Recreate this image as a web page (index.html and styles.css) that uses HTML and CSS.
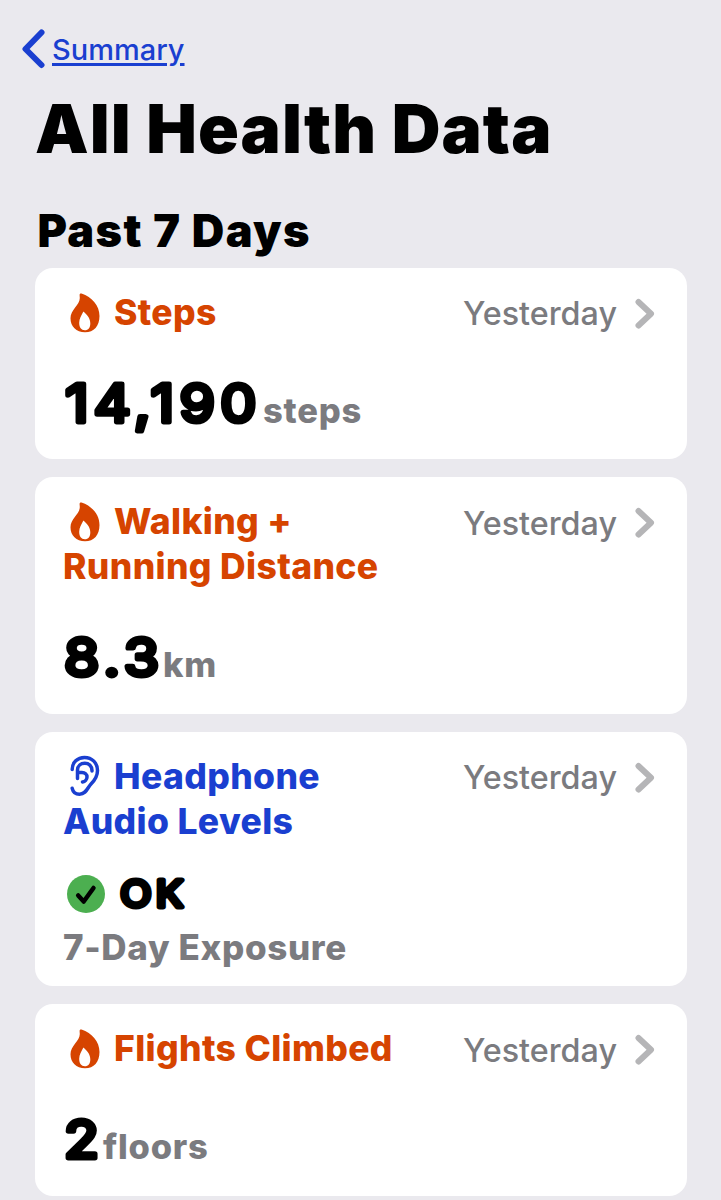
FILE: index.html
```html
<!DOCTYPE html>
<html lang="en">
<head>
  <meta charset="UTF-8" />
  <meta name="viewport" content="width=device-width, initial-scale=1.0" />
  <title>All Health Data</title>
  <link rel="stylesheet" href="styles.css">
</head>
<body>
  <!-- shared icons -->
  <svg class="sprite" width="0" height="0">
    <symbol id="flame" viewBox="0 0 30 40">
      <path fill-rule="evenodd" d="M9.600 1.800C9.700.6 10.500.2 11.500.5C22 4 29.500 12.500 29.500 23C29.500 33 24 39.300 15 39.300C6.200 39.300.5 33.600.5 25.300C.5 16.600 9.800 12.200 9.800 5C9.800 3.700 9.500 2.700 9.600 1.800ZM14.200 19.200C13.900 18.700 13.300 18.800 13 19.300C11.600 22.200 9.200 25.500 9.200 29.800C9.200 34.500 11.300 37.300 14.800 37.300C18.300 37.300 20.300 34.700 20.300 30.500C20.300 25.700 17.800 22.600 14.200 19.200Z" />
    </symbol>
    <symbol id="chevron" viewBox="0 0 20 32">
      <path d="M3.500 4L16 15.700L3.500 27.500" />
    </symbol>
  </svg>

  <nav class="nav">
    <a href="#" class="back">
      <svg class="back-icon" viewBox="0 0 24 40"><path d="M20.500 3.500L4.500 20L20.500 36" /></svg>
      <span>Summary</span>
    </a>
  </nav>

  <h1 class="title">All Health Data</h1>
  <h2 class="section-title">Past 7 Days</h2>

  <main class="cards">
    <section class="card">
      <header class="card-head">
        <h3 class="name activity"><svg class="icon"><use href="#flame" /></svg>Steps</h3>
        <div class="when">Yesterday <svg class="chevron"><use href="#chevron" /></svg></div>
      </header>
      <div class="reading">
        <svg class="value" width="197" height="60"><text x="2" y="47">14,190</text></svg>
        <span class="unit">steps</span>
      </div>
    </section>

    <section class="card">
      <header class="card-head">
        <h3 class="name activity"><svg class="icon"><use href="#flame" /></svg>Walking +<br>Running Distance</h3>
        <div class="when">Yesterday <svg class="chevron"><use href="#chevron" /></svg></div>
      </header>
      <div class="reading">
        <svg class="value" width="97" height="60"><text x="1" y="47">8.3</text></svg>
        <span class="unit">km</span>
      </div>
    </section>

    <section class="card">
      <header class="card-head">
        <h3 class="name hearing"><svg class="icon ear" viewBox="0 0 30 42"><path d="M2.200 14.500C2.200 7.500 7.500 2.400 14.500 2.400C22 2.400 27.500 8 27.500 15.500C27.500 22 24.500 25.500 21 29C17.500 32.600 16.200 39.200 9.500 39.200C5.500 39.200 2.900 36.500 2.200 33.300" /><path d="M22 16V15.500C22 11.200 19 8.300 14.800 8.300C10.500 8.300 7.500 11.200 7.500 15V23.500M7.500 17.500H12C15 17.500 17 19.300 17 22C17 24.600 15 26.600 12.500 27" /></svg>Headphone<br>Audio Levels</h3>
        <div class="when">Yesterday <svg class="chevron"><use href="#chevron" /></svg></div>
      </header>
      <div class="status">
        <svg class="check" viewBox="0 0 38 38"><circle cx="19" cy="19" r="19" /><path d="M11.200 20.500L16.700 26.500L26.500 13" /></svg>
        <svg class="value value-ok" width="76" height="44"><text x="2" y="35">OK</text></svg>
      </div>
      <p class="note">7-Day Exposure</p>
    </section>

    <section class="card">
      <header class="card-head">
        <h3 class="name activity"><svg class="icon"><use href="#flame" /></svg>Flights Climbed</h3>
        <div class="when">Yesterday <svg class="chevron"><use href="#chevron" /></svg></div>
      </header>
      <div class="reading">
        <svg class="value" width="37" height="60"><text x="1" y="47">2</text></svg>
        <span class="unit">floors</span>
      </div>
    </section>
  </main>
</body>
</html>
```
FILE: styles.css
```css
* {
  box-sizing: border-box;
}
body {
  margin: 0;
  height: 1200px;
  background: #eae9ee;
  color: #000;
  overflow: hidden;
  font-family: Inter, "Liberation Sans", sans-serif;
}
h1, h2, h3, p {
  margin: 0;
}
.sprite {
  display: none;
}
.nav {
  height: 90px;
  padding: 29px 0 0 21px;
}
.back {
  display: inline-flex;
  align-items: center;
  gap: 7px;
  height: 40px;
  color: #1a3fd0;
  font-size: 29px;
  font-weight: 500;
  text-decoration: none;
}
.back span {
  text-decoration: underline;
  text-decoration-thickness: 2.5px;
  text-underline-offset: 3px;
}
.back-icon {
  width: 24px;
  height: 40px;
  fill: none;
  stroke: #1a3fd0;
  stroke-width: 6;
  stroke-linecap: round;
  stroke-linejoin: round;
}
.title {
  height: 110px;
  padding-left: 35px;
  font-size: 67.5px;
  font-weight: 900;
  letter-spacing: 1.05px;
  line-height: 78px;
  white-space: nowrap;
}
.section-title {
  height: 67.5px;
  padding-left: 37.5px;
  font-size: 45px;
  font-weight: 900;
  letter-spacing: 1.4px;
  line-height: 62px;
}
.cards {
  display: flex;
  flex-direction: column;
  gap: 18px;
  padding: 0 34px 0 35px;
}
.card {
  padding: 22px 28px 24.5px;
  background: #fff;
  border-radius: 18px;
}
.card-head {
  display: flex;
  justify-content: space-between;
  line-height: 45px;
}
.name {
  font-size: 35.5px;
  font-weight: 800;
  letter-spacing: 0.35px;
  white-space: nowrap;
}
.activity {
  color: #d64400;
  fill: #d64400;
}
.hearing {
  color: #1a3fd0;
}
.icon {
  width: 30px;
  height: 40px;
  margin: -4px 14px -4px 7px;
  vertical-align: -4px;
}
.ear {
  height: 42px;
  fill: none;
  stroke: #1a3fd0;
  stroke-width: 3.5;
  stroke-linecap: round;
  stroke-linejoin: round;
}
.when {
  display: flex;
  align-items: center;
  gap: 18px;
  height: 45px;
  padding-top: 3px;
  color: #7b7b7f;
  font-size: 32.3px;
  font-weight: 500;
}
.chevron {
  width: 20px;
  height: 32px;
  margin-right: 4px;
  fill: none;
  stroke: #b5b5b7;
  stroke-width: 6;
  stroke-linecap: round;
  stroke-linejoin: round;
}
.reading {
  display: flex;
  margin-top: 40px;
  height: 60px;
}
/* rounded digits: a lighter weight thickened with a round-joined outline */
.value {
  flex: none;
  overflow: visible;
  font-size: 52px;
  font-weight: 400;
  letter-spacing: 4.8px;
  stroke: #000;
  stroke-width: 5;
  stroke-linejoin: round;
}
.value text {
  transform: scaleX(1.1);
}
.value-ok {
  font-size: 37px;
  letter-spacing: 4px;
}
.unit {
  margin-left: 3px;
  color: #7b7b7f;
  font-size: 34.5px;
  font-weight: 800;
  letter-spacing: 0.8px;
  line-height: 71px;
}
.status {
  display: flex;
  align-items: center;
  gap: 13px;
  height: 44px;
  margin-top: 28px;
  padding-left: 4px;
}
.check {
  width: 38px;
  height: 38px;
  fill: #4caf50;
}
.check path {
  fill: none;
  stroke: #000;
  stroke-width: 4.5;
  stroke-linecap: round;
  stroke-linejoin: round;
}
.note {
  height: 46px;
  color: #7b7b7f;
  font-size: 35px;
  font-weight: 800;
  letter-spacing: 0.65px;
  line-height: 62px;
  white-space: nowrap;
}
```
